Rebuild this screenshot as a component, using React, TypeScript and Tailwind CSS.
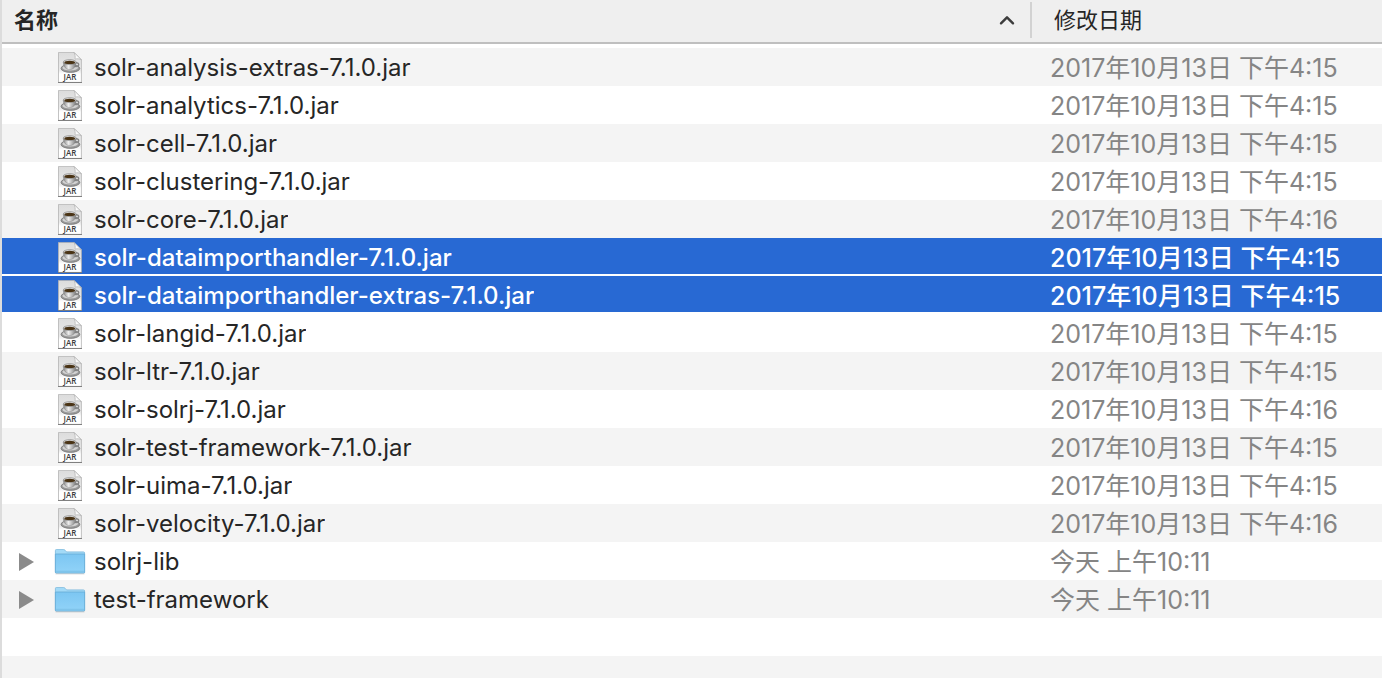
import React, { useState } from "react";

type Entry = { name: string; date: string; kind: "jar" | "folder" };

const entries: Entry[] = [
  { name: "solr-analysis-extras-7.1.0.jar", date: "2017年10月13日 下午4:15", kind: "jar" },
  { name: "solr-analytics-7.1.0.jar", date: "2017年10月13日 下午4:15", kind: "jar" },
  { name: "solr-cell-7.1.0.jar", date: "2017年10月13日 下午4:15", kind: "jar" },
  { name: "solr-clustering-7.1.0.jar", date: "2017年10月13日 下午4:15", kind: "jar" },
  { name: "solr-core-7.1.0.jar", date: "2017年10月13日 下午4:16", kind: "jar" },
  { name: "solr-dataimporthandler-7.1.0.jar", date: "2017年10月13日 下午4:15", kind: "jar" },
  { name: "solr-dataimporthandler-extras-7.1.0.jar", date: "2017年10月13日 下午4:15", kind: "jar" },
  { name: "solr-langid-7.1.0.jar", date: "2017年10月13日 下午4:15", kind: "jar" },
  { name: "solr-ltr-7.1.0.jar", date: "2017年10月13日 下午4:15", kind: "jar" },
  { name: "solr-solrj-7.1.0.jar", date: "2017年10月13日 下午4:16", kind: "jar" },
  { name: "solr-test-framework-7.1.0.jar", date: "2017年10月13日 下午4:15", kind: "jar" },
  { name: "solr-uima-7.1.0.jar", date: "2017年10月13日 下午4:15", kind: "jar" },
  { name: "solr-velocity-7.1.0.jar", date: "2017年10月13日 下午4:16", kind: "jar" },
  { name: "solrj-lib", date: "今天 上午10:11", kind: "folder" },
  { name: "test-framework", date: "今天 上午10:11", kind: "folder" },
];

function JarIcon() {
  return (
    <svg width="26" height="32" viewBox="0 0 26 32" aria-hidden="true">
      <defs>
        <linearGradient id="paper" x1="0" y1="0" x2="0" y2="1">
          <stop offset="0" stopColor="#dcdcdc" />
          <stop offset="0.6" stopColor="#ebebeb" />
          <stop offset="0.72" stopColor="#ffffff" />
        </linearGradient>
        <linearGradient id="cup" x1="0" y1="0" x2="1" y2="0">
          <stop offset="0" stopColor="#858585" />
          <stop offset="0.4" stopColor="#eeeeee" />
          <stop offset="1" stopColor="#7c7c7c" />
        </linearGradient>
      </defs>
      <path d="M1.5 0.4H17L24.4 7.8V30.4H1.5Z" fill="url(#paper)" stroke="#b4b4b4" strokeWidth="0.8" />
      <path d="M1 30.5H25" stroke="#777" strokeWidth="0.9" />
      <path d="M17 0.4L24.4 7.8C22.5 6.6 20 6.6 18 7.2C18.5 4.6 18 2.6 17 0.4Z" fill="#fafafa" stroke="#b0b0b0" strokeWidth="0.7" />
      <ellipse cx="13.4" cy="16.4" rx="9.4" ry="4" fill="#999999" stroke="#6e6e6e" strokeWidth="0.7" />
      <ellipse cx="13.2" cy="15.8" rx="7.8" ry="2.8" fill="#d2d2d2" />
      <ellipse cx="19" cy="12.6" rx="2.7" ry="1.9" fill="none" stroke="#858585" strokeWidth="1.4" />
      <path d="M6.4 10.4C6.4 14.7 9 17.5 12.7 17.5C16.4 17.5 19 14.7 19 10.4Z" fill="url(#cup)" stroke="#777" strokeWidth="0.4" />
      <ellipse cx="12.7" cy="10.1" rx="6.5" ry="2.4" fill="#e2e2e2" stroke="#707070" strokeWidth="0.6" />
      <ellipse cx="12.7" cy="10.4" rx="5.4" ry="1.7" fill="#493315" />
      <text x="13" y="28.4" textAnchor="middle" fontSize="8" fontWeight="600" fontFamily="Open Sans, sans-serif" fill="#3c3c3c">
        JAR
      </text>
    </svg>
  );
}

function FolderIcon() {
  return (
    <svg width="32" height="26" viewBox="0 0 32 26" aria-hidden="true">
      <defs>
        <linearGradient id="folder" x1="0" y1="0" x2="0" y2="1">
          <stop offset="0" stopColor="#7cc6f2" />
          <stop offset="1" stopColor="#91d3f8" />
        </linearGradient>
      </defs>
      <path d="M1.5 24.8H30.5" stroke="#000" strokeOpacity="0.2" strokeWidth="1" />
      <path d="M1.4 23.5V1.6Q1.4 0.4 2.6 0.4H9.3Q10.3 0.4 11 1.2L12.6 2.9H29.5Q30.6 2.9 30.6 4V23.5Z" fill="#a3daf7" stroke="#79b8dc" strokeWidth="0.8" />
      <path d="M1.4 5H30.6V23.1Q30.6 24 29.7 24H2.3Q1.4 24 1.4 23.1Z" fill="url(#folder)" stroke="#66abd4" strokeWidth="0.8" />
      <path d="M2 22.3H30" stroke="#73b9e1" strokeWidth="0.7" />
    </svg>
  );
}

export default function App() {
  const [selected, setSelected] = useState<number[]>([5, 6]);
  const [reversed, setReversed] = useState(false);
  const rows = entries.map((entry, id) => ({ ...entry, id }));
  if (reversed) rows.reverse();

  return (
    <main className="h-screen overflow-hidden border-l-2 border-[#dcdcdc] bg-white font-[Inter,'Noto_Sans_CJK_SC',sans-serif] text-[#262626]">
      <table className="w-full table-fixed border-separate border-spacing-0 text-left">
        <colgroup>
          <col />
          <col className="w-[352px]" />
        </colgroup>
        <thead className="bg-[#efefef]">
          <tr className="text-[22px] leading-8">
            <th className="h-11 border-b-2 border-[#bfbfbf] p-0 pl-3 font-bold">
              <button
                type="button"
                onClick={() => setReversed(!reversed)}
                className="flex w-full items-center justify-between pr-[15px] pb-0.5"
              >
                名称
                <svg width="16" height="10" viewBox="0 0 16 10" fill="none" aria-hidden="true">
                  <path d="M2 8.3L8 2.3L14 8.3" stroke="#3c3c3c" strokeWidth="2.4" strokeLinecap="round" strokeLinejoin="round" />
                </svg>
              </button>
            </th>
            <th className="border-b-2 border-[#bfbfbf] p-0 font-normal">
              <div className="mt-0.5 mb-1 flex h-9 items-center border-l-2 border-[#d2d2d2] pl-[22px]">修改日期</div>
            </th>
          </tr>
        </thead>
        <tbody>
          <tr aria-hidden="true" className="h-1">
            <td colSpan={2} className="p-0" />
          </tr>
          {rows.map((row, i) => {
            const on = selected.includes(row.id);
            const tone = on
              ? "bg-[#2869d3] text-white border-white font-medium"
              : i % 2 === 0
                ? "bg-[#f4f4f4] border-[#f4f4f4]"
                : "bg-white border-white";
            return (
              <tr key={row.id} aria-selected={on} onClick={() => setSelected([row.id])}>
                <td className="p-0">
                  <div className={`flex h-[38px] items-center border-b-2 pt-1 pl-4 text-2xl ${tone}`}>
                    <span className="flex w-9 shrink-0">
                      {row.kind === "folder" && (
                        <button type="button" aria-label={`展开 ${row.name}`}>
                          <svg width="16" height="18" viewBox="0 0 16 18" className="block" aria-hidden="true">
                            <path d="M1 0L16 9L1 18Z" fill="#8b8b8b" />
                          </svg>
                        </button>
                      )}
                    </span>
                    <span className="flex w-8 shrink-0 justify-center">
                      {row.kind === "jar" ? <JarIcon /> : <FolderIcon />}
                    </span>
                    <span className="truncate pl-2">{row.name}</span>
                  </div>
                </td>
                <td className="p-0">
                  <div className={`flex h-[38px] items-center border-b-2 pt-1 pl-5 text-[25px] leading-8 ${tone} ${on ? "" : "text-[#858585]"}`}>
                    <span className="whitespace-nowrap">{row.date}</span>
                  </div>
                </td>
              </tr>
            );
          })}
          <tr aria-hidden="true" className="h-[38px]">
            <td colSpan={2} className="bg-white p-0" />
          </tr>
          <tr aria-hidden="true" className="h-[38px]">
            <td colSpan={2} className="bg-[#f4f4f4] p-0" />
          </tr>
        </tbody>
      </table>
    </main>
  );
}
